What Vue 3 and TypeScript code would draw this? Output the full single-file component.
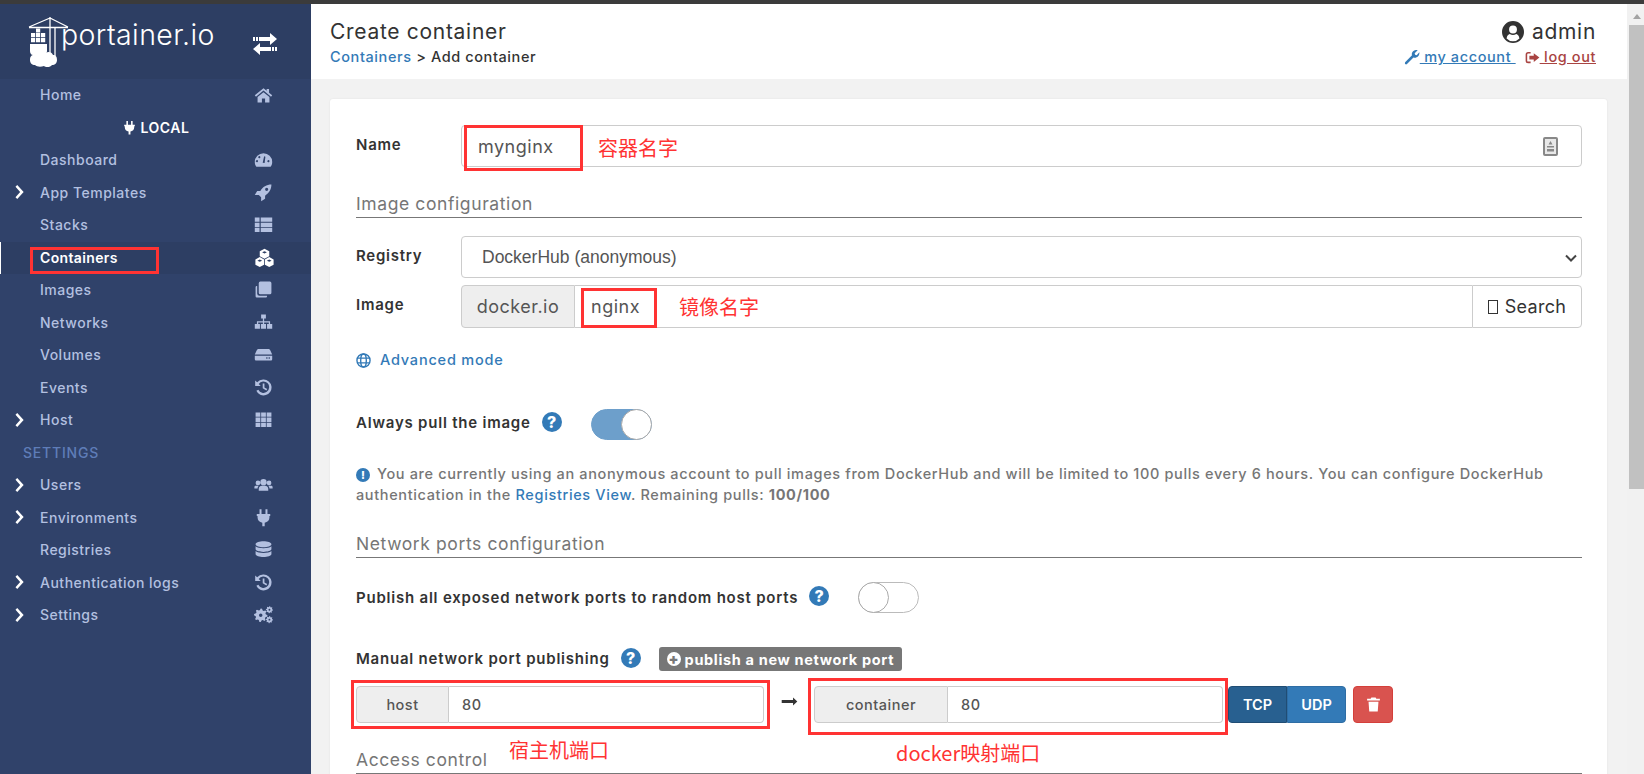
<template>
  <div class="page">
    <div class="window-edge"></div>
    <div class="shell">
      <aside class="sidebar">
        <div class="brand">
          <svg class="logo" viewBox="0 0 34 56" width="34" height="56">
            <g stroke="#fff" fill="none">
              <path d="M0 12.500H39M21 2V41M26 12V41M21 3L0 12M21 3L39 12" stroke-width="1.300" />
            </g>
            <g fill="#fff">
              <path d="M2 18h4.200v4.200H2zM7 18h4.200v4.200H7zM7 13.500h4.200v4H7zM12 18h4.200v4.200H12zM2 23h4.200v4.200H2zM7 23h4.200v4.200H7zM12 23h4.200v4.200H12z" />
              <path d="M1 29h17v7c0 2-1 4-3 4H4c-2 0-3-2-3-4z" />
              <path d="M8 38c2-3 7-3 9 0 2-2 6-1 7 2 3 0 4 2 4 5 0 3-2 5-5 5-1 2-6 3-8 1-3 1-7 1-9-1-3 0-5-2-5-5 0-3 1-5 4-5 0-1 2-2 3-2z" />
            </g>
          </svg>
          <span class="brand-name">portainer.io</span>
          <svg class="swap" viewBox="0 0 24 22" width="24" height="22">
            <path fill="#fff" d="M6 4h11V0l7 6-7 6V8H6zM3 4h2v4H3zM0 4h2v4H0zM18 14H7v-4l-7 6 7 6v-4h11zM21 14h-2v4h2zM24 14h-2v4h2z" />
          </svg>
        </div>
        <nav class="nav">
          <template v-for="item in navItems" :key="item.label">
            <div v-if="item.kind === 'env'" class="nav-env">
              <svg viewBox="0 0 24 24" width="15" height="15"><path :d="icons.plug" /></svg>
              {{ item.label }}
            </div>
            <div v-else-if="item.kind === 'head'" class="nav-head">{{ item.label }}</div>
            <div v-else class="nav-row" :class="{ active: item.active }">
              <svg v-if="item.arrow" class="nav-arrow" viewBox="0 0 24 24" width="14" height="14"><path :d="icons.chevron" /></svg>
              <span class="nav-label">{{ item.label }}</span>
              <svg class="nav-icon" viewBox="0 0 24 24" width="19" height="19"><path fill-rule="evenodd" :d="icons[item.icon!]" /></svg>
            </div>
          </template>
        </nav>
      </aside>

      <main class="main">
        <header class="topbar">
          <div>
            <div class="page-title">Create container</div>
            <div class="crumbs"><a class="link">Containers</a> &gt; Add container</div>
          </div>
          <div class="user">
            <div class="user-name">
              <svg viewBox="0 0 24 24" width="22" height="22"><path fill="#333" fill-rule="evenodd" :d="icons.userCircle" /></svg>
              admin
            </div>
            <div class="user-links">
              <a class="link">
                <svg viewBox="0 0 24 24" width="16" height="16"><path fill="#337ab7" :d="icons.wrench" /></svg>
                <span>&nbsp;my account&nbsp;</span>
              </a>
              <a class="link danger">
                <svg viewBox="0 0 24 24" width="15" height="15"><path fill="#a94442" :d="icons.signOut" /></svg>
                <span>&nbsp;log out</span>
              </a>
            </div>
          </div>
        </header>

        <section class="content">
          <form class="card" @submit.prevent>
            <div class="form-row">
              <label class="field-label">Name</label>
              <div class="input-wrap">
                <input class="control" value="mynginx" />
                <svg class="id-icon" viewBox="0 0 15 19" width="15" height="19">
                  <rect x="1" y="1" width="13" height="17" rx="1" fill="#e8e8e8" stroke="#888" stroke-width="2" />
                  <path d="M7.500 4l2 3.500h-4zM4 9h7v1.500H4zM4 12h7v2.500H4z" fill="#888" />
                </svg>
              </div>
            </div>

            <div class="section-title first">Image configuration</div>

            <div class="form-row registry">
              <label class="field-label">Registry</label>
              <div class="input-wrap">
                <select class="control picker">
                  <option>DockerHub (anonymous)</option>
                </select>
                <svg class="picker-arrow" viewBox="0 0 12 8" width="12" height="8">
                  <path d="M1 1.500l5 5 5-5" fill="none" stroke="#444" stroke-width="2" />
                </svg>
              </div>
            </div>

            <div class="form-row image-row">
              <label class="field-label">Image</label>
              <div class="group">
                <span class="addon domain">docker.io</span>
                <input class="control joined" value="nginx" />
                <button class="search" type="button"><i class="tofu"></i>Search</button>
              </div>
            </div>

            <a class="link advanced">
              <svg viewBox="0 0 16 16" width="15" height="15" fill="none" stroke="#337ab7" stroke-width="1.500">
                <circle cx="8" cy="8" r="7" />
                <ellipse cx="8" cy="8" rx="3" ry="7" />
                <path d="M1 5.500h14M1 10.500h14" />
              </svg>
              Advanced mode
            </a>

            <div class="switch-row pull">
              <span class="strong-label">Always pull the image</span>
              <span class="hint">?</span>
              <span class="toggle on"><i></i></span>
            </div>

            <p class="note">
              <span class="note-mark">!</span>You are currently using an anonymous account to pull images from DockerHub and will be limited to 100 pulls every 6 hours. You can configure DockerHub authentication in the <a class="link">Registries View</a>. Remaining pulls: <b>100/100</b>
            </p>

            <div class="section-title network">Network ports configuration</div>

            <div class="switch-row publish">
              <span class="strong-label">Publish all exposed network ports to random host ports</span>
              <span class="hint">?</span>
              <span class="toggle"><i></i></span>
            </div>

            <div class="switch-row manual">
              <span class="strong-label">Manual network port publishing</span>
              <span class="hint">?</span>
              <span class="badge"><i class="badge-plus">+</i>publish a new network port</span>
            </div>

            <div class="ports">
              <div class="group port host">
                <span class="addon">host</span>
                <input class="control joined end" value="80" />
              </div>
              <svg class="port-arrow" viewBox="0 0 24 24" width="17" height="17"><path :d="icons.arrow" /></svg>
              <div class="group port target">
                <span class="addon">container</span>
                <input class="control joined end" value="80" />
              </div>
              <div class="proto">
                <button type="button" class="proto-btn selected">TCP</button>
                <button type="button" class="proto-btn">UDP</button>
              </div>
              <button type="button" class="remove">
                <svg viewBox="0 0 24 24" width="17" height="17"><path fill="#fff" :d="icons.trash" /></svg>
              </button>
            </div>

            <div class="section-title access">Access control</div>
          </form>
        </section>
      </main>

      <div class="scrollbar">
        <div class="scroll-up"></div>
        <div class="scroll-thumb"></div>
      </div>
    </div>

    <!-- red markup drawn on top of the screenshot -->
    <i class="mark mark-nav"></i>
    <i class="mark mark-name"></i>
    <i class="mark mark-image"></i>
    <i class="mark mark-host"></i>
    <i class="mark mark-target"></i>
    <span class="note-red red-name">容器名字</span>
    <span class="note-red red-image">镜像名字</span>
    <span class="note-red red-host">宿主机端口</span>
    <span class="note-red red-target">docker映射端口</span>
  </div>
</template>

<script setup lang="ts">
interface NavItem {
  label: string;
  kind?: "env" | "head";
  icon?: string;
  arrow?: boolean;
  active?: boolean;
}

// little gear outline, used for the cogs icon
function gear(cx: number, cy: number, r: number, hole: number, teeth: number): string {
  const pts: string[] = [];
  const step = (Math.PI * 2) / (teeth * 4);
  for (let i = 0; i < teeth * 4; i++) {
    const rad = i % 4 < 2 ? r : r * 0.76;
    const a = i * step;
    pts.push(`${(cx + Math.cos(a) * rad).toFixed(2)} ${(cy + Math.sin(a) * rad).toFixed(2)}`);
  }
  return `M${pts.join("L")}Z M${cx - hole} ${cy}a${hole} ${hole} 0 1 0 ${hole * 2} 0a${hole} ${hole} 0 1 0 ${-hole * 2} 0Z`;
}

const history =
  "M12 2A10 10 0 1 1 3 16l2.500-1.200A7.200 7.200 0 1 0 6 7.500L8.500 10H1.500V3L4 5.500A10 10 0 0 1 12 2ZM11 7h2.200v5l3.500 2-1.100 1.800-4.600-2.700Z";

const icons: Record<string, string> = {
  home: "M12 4L1 13l1.500 1.800L12 7l9.500 7.800L23 13l-4-3.300V5h-3v2.200ZM12 9l-7.500 6v7H10v-5h4v5h5.500v-7Z",
  gauge: "M12 4A11 11 0 0 0 1 15c0 2.500.8 4.700 2 6h18c1.200-1.300 2-3.500 2-6A11 11 0 0 0 12 4ZM11 16l1.800-8 1.600.4-1 8ZM5 14a1.300 1.300 0 1 0 0 .1ZM19.500 14a1.300 1.300 0 1 0 0 .1ZM8 9a1.300 1.300 0 1 0 0 .1Z",
  rocket: "M22 2c-6 0-11 3-14 8H4l-3 5h5l3 3v5l5-3v-4c5-3 8-8 8-14ZM18 8a2 2 0 1 0-4 0 2 2 0 0 0 4 0Z",
  list: "M1 3h6v5.500H1ZM8.500 3H23v5.500H8.500ZM1 9.700h6v5.300H1ZM8.500 9.700H23v5.300H8.500ZM1 16.200h6V21.500H1ZM8.500 16.200H23V21.500H8.500Z",
  cubes: "M12 1l6 3v6.500l-6 3-6-3V4ZM12 4l-3 1.500L12 7l3-1.500ZM6 11.500l5.500 3V21L6 24 .500 21v-6.500ZM6 14.500l-3 1.500 3 1.500L9 16ZM18 11.500l5.500 3V21L18 24l-5.500-3v-6.500ZM18 14.500L15 16l3 1.500 3-1.500Z",
  clone: "M8 2h12a2 2 0 0 1 2 2v12a2 2 0 0 1-2 2H8a2 2 0 0 1-2-2V4a2 2 0 0 1 2-2ZM4 7.500V17a3 3 0 0 0 3 3h9.500v.5a1.500 1.500 0 0 1-1.500 1.500H3.500A1.500 1.500 0 0 1 2 20.500V9a1.500 1.500 0 0 1 1.500-1.500Z",
  sitemap: "M9 2h6v5H9ZM11.200 7h1.600v3.500h7.500V14h-1.600v-2H12.800v2h-1.600v-2H5.300v2H3.700v-3.500h7.500ZM1 14h6.500v6H1ZM8.700 14h6.500v6H8.700ZM16.500 14H23v6h-6.500Z",
  hdd: "M6 5h12c1 0 2 .6 2.500 1.500L23 12H1l2.500-5.500C4 5.600 5 5 6 5ZM1 13.500h22V18a1.500 1.500 0 0 1-1.500 1.500h-19A1.500 1.500 0 0 1 1 18ZM15.500 15.500v2H17v-2ZM18.500 15.500v2H20v-2Z",
  history,
  grid: "M2 3h6v5.500H2ZM9 3h6v5.500H9ZM16 3h6v5.500h-6ZM2 9.500h6V15H2ZM9 9.500h6V15H9ZM16 9.500h6V15h-6ZM2 16h6v5.500H2ZM9 16h6v5.500H9ZM16 16h6v5.500h-6Z",
  users: "M12 5a4 4 0 1 1 0 8 4 4 0 0 1 0-8ZM5 7a3 3 0 1 1 0 6 3 3 0 0 1 0-6ZM19 7a3 3 0 1 1 0 6 3 3 0 0 1 0-6ZM6 20v-2.500c0-2.500 2-4 4-4h4c2 0 4 1.500 4 4V20ZM.500 17v-2c0-1 1-1.500 2-1.500H6c-1 .8-1.500 2-1.500 3.500ZM23.500 17v-2c0-1-1-1.500-2-1.500H18c1 .8 1.500 2 1.500 3.500Z",
  plug: "M7 1.500h2.500v6h5v-6H17v6h3.500V10h-1v2c0 3.500-2.500 6-6 6.500V23h-3v-4.500c-3.500-.5-6-3-6-6.500v-2h-1V7.500H7Z",
  database: "M12 1.500c5 0 10 1.300 10 3.800S17 9 12 9 2 7.800 2 5.300 7 1.500 12 1.500ZM2 8c2 1.800 6 2.500 10 2.500S20 9.800 22 8v3.500C22 13.800 17 15 12 15S2 13.800 2 11.500ZM2 14c2 1.800 6 2.500 10 2.500s8-.7 10-2.500v3.800c0 2.500-5 3.700-10 3.700S2 20.300 2 17.800Z",
  cogs: `${gear(8.500, 13, 8.500, 2.200, 8)} ${gear(19.500, 6, 4.500, 1.200, 8)} ${gear(19.500, 18.500, 4.500, 1.200, 8)}`,
  chevron: "M6 3l3-3 11 12L9 24l-3-3 8-9Z",
  userCircle: "M12 0a12 12 0 1 0 0 24 12 12 0 0 0 0-24ZM12 5a4.300 4.300 0 1 1 0 8.600A4.300 4.300 0 0 1 12 5ZM5 19c.5-3 2-4.500 3.500-4.800 1 .8 2.200 1.200 3.500 1.200s2.500-.4 3.500-1.200c1.500.3 3 1.800 3.500 4.800a9.500 9.500 0 0 1-14 0Z",
  wrench: "M2 19.500l10-10C11 6 13 2 18 1.500c1 0 2 .2 2.500.5L16 6.500l.7 2.300 2.300.7 4-4.500c.5 3.500-1.500 7.500-5.500 8-1.200.2-2.300 0-3.300-.3L4.500 22.500c-.8.8-2 .8-2.700 0-.7-.7-.6-2.200.2-3Z",
  signOut: "M9 3H5a4 4 0 0 0-4 4v10a4 4 0 0 0 4 4h4v-2.500H5A1.500 1.500 0 0 1 3.500 17V7A1.500 1.500 0 0 1 5 5.500h4ZM14 5l9 7-9 7v-4H7V9h7Z",
  arrow: "M1 10h16V6.500l6 5.500-6 5.500V14H1Z",
  trash: "M9 2h6l1 2h5v2.500H3V4h5ZM5 8h14l-1 14H6Z",
};

const navItems: NavItem[] = [
  { label: "Home", icon: "home" },
  { label: "LOCAL", kind: "env" },
  { label: "Dashboard", icon: "gauge" },
  { label: "App Templates", icon: "rocket", arrow: true },
  { label: "Stacks", icon: "list" },
  { label: "Containers", icon: "cubes", active: true },
  { label: "Images", icon: "clone" },
  { label: "Networks", icon: "sitemap" },
  { label: "Volumes", icon: "hdd" },
  { label: "Events", icon: "history" },
  { label: "Host", icon: "grid", arrow: true },
  { label: "SETTINGS", kind: "head" },
  { label: "Users", icon: "users", arrow: true },
  { label: "Environments", icon: "plug", arrow: true },
  { label: "Registries", icon: "database" },
  { label: "Authentication logs", icon: "history", arrow: true },
  { label: "Settings", icon: "cogs", arrow: true },
];
</script>

<style>
html,
body {
  margin: 0;
  overflow: hidden;
}
</style>

<style scoped>
.page {
  position: relative;
  width: 1644px;
  height: 774px;
  overflow: hidden;
  font-family: Inter, "Noto Sans", sans-serif;
  color: #333;
  background: #f2f2f2;
}

.window-edge {
  height: 4px;
  background: #3b3b3b;
}

.shell {
  display: flex;
  height: 770px;
}

.sidebar {
  width: 311px;
  flex: none;
  background: #30426a;
}

.brand {
  display: flex;
  align-items: center;
  height: 75px;
  padding-left: 29px;
  background: #2d3e63;
  color: #fff;
  position: relative;
}

.logo {
  overflow: visible;
  flex: none;
  margin-top: 2px;
}

.brand-name {
  font-size: 28.500px;
  font-weight: 300;
  letter-spacing: 0.400px;
  margin-left: -2px;
  margin-top: -14px;
}

.swap {
  position: absolute;
  left: 253px;
  top: 29px;
}

.nav-row,
.nav-env,
.nav-head {
  height: 32.500px;
  display: flex;
  align-items: center;
  box-sizing: border-box;
  font-size: 14px;
  letter-spacing: 0.500px;
  padding-bottom: 1px;
}

.nav-row {
  position: relative;
  font-weight: 500;
  color: #b3c0e0;
  padding-left: 40px;
}

.nav-row.active {
  background: #2d3e63;
  border-left: 1px solid #fff;
  padding-left: 39px;
  color: #fff;
  font-weight: 600;
  letter-spacing: 0.350px;
}

.nav-arrow {
  position: absolute;
  left: 12px;
  fill: #fff;
}

.nav-icon {
  position: absolute;
  left: 254px;
  fill: #b3c0e0;
}

.active .nav-icon {
  fill: #fff;
}

.nav-env {
  justify-content: center;
  gap: 4px;
  color: #fff;
  font-weight: 600;
}

.nav-env svg {
  fill: #fff;
}

.nav-head {
  padding-left: 23px;
  color: #5f7db8;
  font-weight: 500;
  letter-spacing: 0.800px;
}

.main {
  flex: 1;
  min-width: 0;
  display: flex;
  flex-direction: column;
}

.topbar {
  height: 75px;
  flex: none;
  box-sizing: border-box;
  padding: 14px 31px 0 19px;
  display: flex;
  justify-content: space-between;
  background: #fff;
}

.page-title {
  font-size: 21px;
  line-height: 28px;
  letter-spacing: 0.700px;
}

.crumbs {
  font-size: 14.500px;
  line-height: 22px;
  font-weight: 500;
  letter-spacing: 0.600px;
}

.link {
  color: #337ab7;
}

.user {
  text-align: right;
}

.user-name {
  display: flex;
  justify-content: flex-end;
  align-items: center;
  gap: 8px;
  font-size: 21px;
  line-height: 28px;
  letter-spacing: 0.700px;
}

.user-links {
  display: flex;
  justify-content: flex-end;
  gap: 9px;
  font-size: 14.500px;
  line-height: 22px;
  font-weight: 500;
  letter-spacing: 0.600px;
}

.user-links a {
  display: flex;
  align-items: center;
}

.user-links span {
  text-decoration: underline;
}

.danger {
  color: #a94442;
}

.content {
  flex: 1;
  padding: 20px 20px 0 19px;
  min-height: 0;
}

.card {
  background: #fff;
  border-radius: 3px;
  box-shadow: 0 0 2px rgba(0, 0, 0, 0.08);
  padding: 26px 25px 0 26px;
  height: 800px;
  box-sizing: border-box;
}

.form-row {
  display: flex;
  align-items: center;
}

.field-label {
  width: 105px;
  flex: none;
  font-size: 15px;
  font-weight: 600;
  letter-spacing: 0.750px;
  margin-top: -4px;
}

.input-wrap {
  position: relative;
  flex: 1;
  display: flex;
}

.control {
  flex: 1;
  min-width: 0;
  height: 42px;
  box-sizing: border-box;
  border: 1px solid #ccc;
  border-radius: 4px;
  padding: 0 16px;
  font-family: inherit;
  font-size: 18px;
  letter-spacing: 0.500px;
  color: #555;
  background: #fff;
  outline: none;
}

.id-icon {
  position: absolute;
  right: 24px;
  top: 12px;
}

.picker {
  appearance: none;
  padding-left: 20px;
  font-family: "Liberation Sans", Arial, sans-serif;
  font-size: 17.500px;
  letter-spacing: 0;
}

.picker-arrow {
  position: absolute;
  right: 5px;
  top: 18px;
}

.section-title {
  font-size: 17.500px;
  line-height: 24px;
  letter-spacing: 0.600px;
  color: #767676;
  border-bottom: 1px solid #777;
  padding-bottom: 1px;
}

.section-title.first {
  margin-top: 25px;
}

.registry {
  margin-top: 18px;
}

.image-row {
  margin-top: 7px;
}

.group {
  flex: 1;
  display: flex;
  height: 43px;
}

.addon {
  flex: none;
  display: flex;
  align-items: center;
  justify-content: center;
  box-sizing: border-box;
  background: #eee;
  border: 1px solid #ccc;
  border-radius: 4px 0 0 4px;
  color: #555;
  font-size: 14.500px;
  font-weight: 500;
  letter-spacing: 0.500px;
}

.domain {
  width: 114px;
  font-size: 18px;
  font-weight: 400;
}

.joined {
  height: auto;
  border-left: 0;
  border-right: 0;
  border-radius: 0;
}

.joined.end {
  border-right: 1px solid #ccc;
  border-radius: 0 4px 4px 0;
  font-size: 14.500px;
  font-weight: 500;
}

.search {
  width: 110px;
  flex: none;
  box-sizing: border-box;
  border: 1px solid #ccc;
  border-radius: 0 4px 4px 0;
  background: #fff;
  color: #333;
  font-family: inherit;
  font-size: 18px;
  letter-spacing: 0.300px;
  display: flex;
  align-items: center;
  justify-content: center;
}

.tofu {
  width: 8px;
  height: 12px;
  border: 1px solid #333;
  margin-right: 7px;
}

.advanced {
  display: flex;
  align-items: center;
  gap: 9px;
  margin-top: 23px;
  font-size: 14.500px;
  font-weight: 500;
  letter-spacing: 0.800px;
  line-height: 18px;
}

.switch-row {
  display: flex;
  align-items: center;
}

.strong-label {
  font-size: 15px;
  font-weight: 600;
  letter-spacing: 0.780px;
}

.hint {
  width: 20px;
  height: 20px;
  margin-left: 11px;
  border-radius: 50%;
  background: #337ab7;
  color: #fff;
  font-size: 16px;
  font-weight: 800;
  line-height: 20px;
  text-align: center;
  flex: none;
  margin-top: -3px;
}

.pull {
  margin-top: 39px;
  height: 32px;
}

.pull .strong-label {
  margin-top: -4px;
}

.pull .hint {
  margin-top: -5px;
}

.manual .strong-label {
  margin-top: -2px;
}

.toggle {
  position: relative;
  width: 61px;
  height: 31px;
  margin-left: 29px;
  border: 1px solid #bbb;
  box-sizing: border-box;
  border-radius: 16px;
  background: #fff;
  flex: none;
}

.toggle i {
  position: absolute;
  left: -1px;
  top: -1px;
  width: 31px;
  height: 31px;
  box-sizing: border-box;
  border-radius: 50%;
  background: #fff;
  border: 1px solid #aaa;
}

.toggle.on {
  background: #6d9fcb;
  border-color: #6d9fcb;
}

.toggle.on i {
  left: auto;
  right: -1px;
}

.note {
  margin: 23px 0 0;
  font-size: 14.500px;
  line-height: 21px;
  font-weight: 500;
  letter-spacing: 0.640px;
  color: #767676;
}

.note b {
  font-weight: 700;
}

.note-mark {
  display: inline-block;
  width: 14px;
  height: 14px;
  margin-right: 7px;
  border-radius: 50%;
  background: #337ab7;
  color: #fff;
  font-size: 11px;
  font-weight: 800;
  line-height: 14px;
  letter-spacing: 0;
  text-align: center;
}

.section-title.network {
  margin-top: 27px;
}

.publish {
  margin-top: 23px;
  height: 32px;
}

.manual {
  margin-top: 34px;
  height: 24px;
}

.badge {
  display: flex;
  align-items: center;
  height: 24px;
  margin-left: 18px;
  padding: 0 8px;
  background: #777;
  border-radius: 3px;
  color: #fff;
  font-size: 14.500px;
  font-weight: 700;
  letter-spacing: 0.650px;
}

.badge-plus {
  width: 14px;
  height: 14px;
  margin-right: 4px;
  border-radius: 50%;
  background: #fff;
  color: #777;
  font-style: normal;
  font-weight: 900;
  line-height: 13px;
  text-align: center;
  letter-spacing: 0;
}

.ports {
  display: flex;
  align-items: center;
  margin-top: 15px;
  height: 37px;
}

.port {
  flex: none;
  height: 37px;
}

.port .control {
  padding: 0 13px;
}

.host {
  width: 408px;
}

.host .addon {
  width: 93px;
}

.target {
  width: 409px;
}

.target .addon {
  width: 134px;
}

.port-arrow {
  margin: -6px 16px 0 17px;
  fill: #333;
  flex: none;
}

.proto {
  display: flex;
  margin-left: 5px;
  height: 37px;
  flex: none;
}

.proto-btn {
  width: 59px;
  border: 1px solid #2e6da4;
  background: #337ab7;
  color: #fff;
  font-family: inherit;
  font-size: 14.500px;
  font-weight: 600;
  padding: 0;
  border-radius: 0 4px 4px 0;
}

.proto-btn.selected {
  background: #286090;
  border-color: #204d74;
  border-radius: 4px 0 0 4px;
}

.remove {
  width: 40px;
  height: 37px;
  margin-left: 7px;
  background: #d9534f;
  border: 1px solid #d43f3a;
  border-radius: 4px;
  display: flex;
  align-items: center;
  justify-content: center;
  padding: 0;
  flex: none;
}

.section-title.access {
  margin-top: 25px;
}

.scrollbar {
  width: 17px;
  flex: none;
  box-sizing: border-box;
  padding-left: 2px;
  background: #f1f1f1;
  display: flex;
  flex-direction: column;
  align-items: center;
}

.scroll-up {
  width: 0;
  height: 0;
  margin-top: 10px;
  margin-bottom: 6px;
  border-left: 4px solid transparent;
  border-right: 4px solid transparent;
  border-bottom: 5px solid #a3a3a3;
}

.scroll-thumb {
  width: 15px;
  height: 464px;
  background: #c1c1c1;
}

.mark {
  position: absolute;
  box-sizing: border-box;
  border: 3px solid #ff3333;
}

.mark-nav {
  left: 30px;
  top: 247px;
  width: 129px;
  height: 27px;
}

.mark-name {
  left: 464px;
  top: 125px;
  width: 119px;
  height: 46px;
}

.mark-image {
  left: 581px;
  top: 288px;
  width: 76px;
  height: 40px;
}

.mark-host {
  left: 351px;
  top: 680px;
  width: 419px;
  height: 49px;
}

.mark-target {
  left: 808px;
  top: 678px;
  width: 420px;
  height: 57px;
}

.note-red {
  position: absolute;
  color: #ff3333;
  font-family: "Noto Sans CJK SC", "Liberation Sans", sans-serif;
  font-size: 20px;
  line-height: 28px;
  white-space: nowrap;
}

.red-name {
  left: 598px;
  top: 134px;
}

.red-image {
  left: 679px;
  top: 293px;
}

.red-host {
  left: 509px;
  top: 736px;
}

.red-target {
  left: 896px;
  top: 739px;
}
</style>
